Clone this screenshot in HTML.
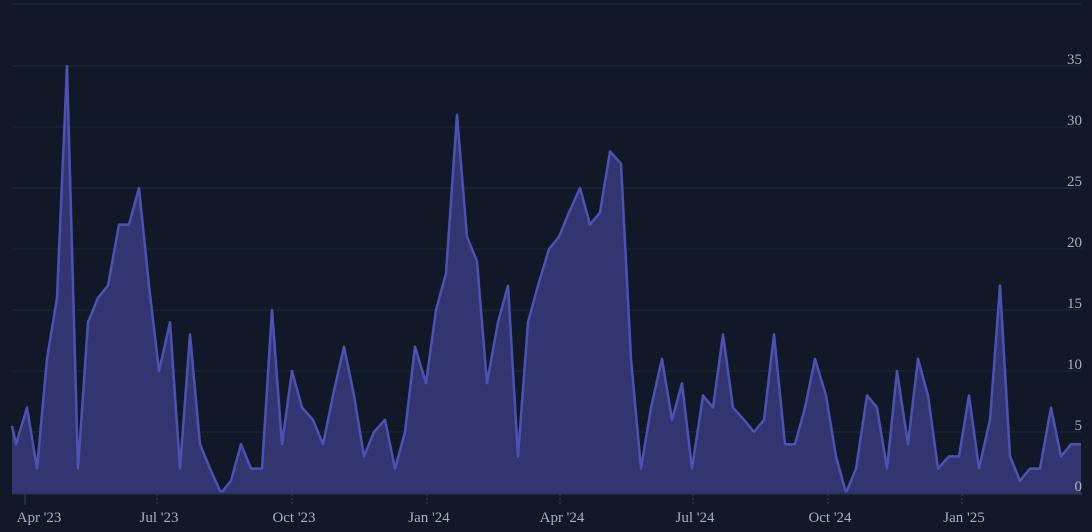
<!DOCTYPE html><html><head><style>
html,body{margin:0;padding:0;background:#111827;width:1092px;height:532px;overflow:hidden}
text{font-family:"Liberation Serif",serif;fill:#a7b0bf;font-size:15px}
</style></head><body>
<svg width="1092" height="532" viewBox="0 0 1092 532">
<line x1="12" y1="4" x2="1082" y2="4" stroke="#1f2a3d"/>
<g stroke="#1f2a3d" stroke-width="1">
<line x1="12" x2="1082" y1="66" y2="66"/><line x1="12" x2="1082" y1="127" y2="127"/>
<line x1="12" x2="1082" y1="188" y2="188"/><line x1="12" x2="1082" y1="249" y2="249"/>
<line x1="12" x2="1082" y1="310" y2="310"/><line x1="12" x2="1082" y1="371" y2="371"/>
<line x1="12" x2="1082" y1="432" y2="432"/>
</g>
<g transform="translate(0,493) scale(1,-12.2)">
<polygon fill="#323570" points="12,0 12,5.5 16,4 27,7 37,2 47,11 57,16 67,35 78,2 88,14 98,16 108,17 119,22 129,22 139,25 149,17 159,10 170,14 180,2 190,13 200,4 210,2 221,0 231,1 241,4 251,2 262,2 272,15 282,4 292,10 302,7 313,6 323,4 333,8 344,12 354,8 364,3 374,5 385,6 395,2 405,5 415,12 426,9 436,15 446,18 457,31 467,21 477,19 487,9 498,14 508,17 518,3 528,14 538,17 549,20 559,21 569,23 580,25 590,22 600,23 610,28 621,27 631,11 641,2 651,7 662,11 672,6 682,9 692,2 703,8 713,7 723,13 733,7 744,6 754,5 764,6 774,13 785,4 795,4 805,7 815,11 826,8 836,3 846,0 856,2 867,8 877,7 887,2 897,10 908,4 918,11 928,8 938,2 949,3 959,3 969,8 979,2 990,6 1000,17 1010,3 1020,1 1030,2 1040,2 1051,7 1061,3 1071,4 1081,4 1081,0"/>
<polyline fill="none" stroke="#4e51b3" stroke-width="2.5" vector-effect="non-scaling-stroke" stroke-linejoin="round" points="12,5.5 16,4 27,7 37,2 47,11 57,16 67,35 78,2 88,14 98,16 108,17 119,22 129,22 139,25 149,17 159,10 170,14 180,2 190,13 200,4 210,2 221,0 231,1 241,4 251,2 262,2 272,15 282,4 292,10 302,7 313,6 323,4 333,8 344,12 354,8 364,3 374,5 385,6 395,2 405,5 415,12 426,9 436,15 446,18 457,31 467,21 477,19 487,9 498,14 508,17 518,3 528,14 538,17 549,20 559,21 569,23 580,25 590,22 600,23 610,28 621,27 631,11 641,2 651,7 662,11 672,6 682,9 692,2 703,8 713,7 723,13 733,7 744,6 754,5 764,6 774,13 785,4 795,4 805,7 815,11 826,8 836,3 846,0 856,2 867,8 877,7 887,2 897,10 908,4 918,11 928,8 938,2 949,3 959,3 969,8 979,2 990,6 1000,17 1010,3 1020,1 1030,2 1040,2 1051,7 1061,3 1071,4 1081,4"/>
</g>
<line x1="12" y1="493.5" x2="1082" y2="493.5" stroke="#2b3550" stroke-width="2"/>
<g text-anchor="end">
<text x="1082" y="64">35</text><text x="1082" y="125">30</text><text x="1082" y="186">25</text>
<text x="1082" y="247">20</text><text x="1082" y="308">15</text><text x="1082" y="369">10</text>
<text x="1082" y="430">5</text><text x="1082" y="491">0</text>
</g>
<g stroke="#3a4460">
<line x1="25" x2="25" y1="494" y2="505"/><line x1="157" x2="157" y1="494" y2="505" stroke-dasharray="2,2"/>
<line x1="292" x2="292" y1="494" y2="505" stroke-dasharray="2,2"/><line x1="427" x2="427" y1="494" y2="505" stroke-dasharray="2,2"/>
<line x1="560" x2="560" y1="494" y2="505" stroke-dasharray="2,2"/><line x1="693" x2="693" y1="494" y2="505" stroke-dasharray="2,2"/>
<line x1="828" x2="828" y1="494" y2="505" stroke-dasharray="2,2"/><line x1="962" x2="962" y1="494" y2="505" stroke-dasharray="2,2"/>
</g>
<g text-anchor="middle" style="font-size:16px">
<text x="39" y="522">Apr '23</text><text x="159" y="522">Jul '23</text><text x="294" y="522">Oct '23</text>
<text x="429" y="522">Jan '24</text><text x="562" y="522">Apr '24</text><text x="695" y="522">Jul '24</text>
<text x="830" y="522">Oct '24</text><text x="964" y="522">Jan '25</text>
</g>
</svg>
</body></html>
